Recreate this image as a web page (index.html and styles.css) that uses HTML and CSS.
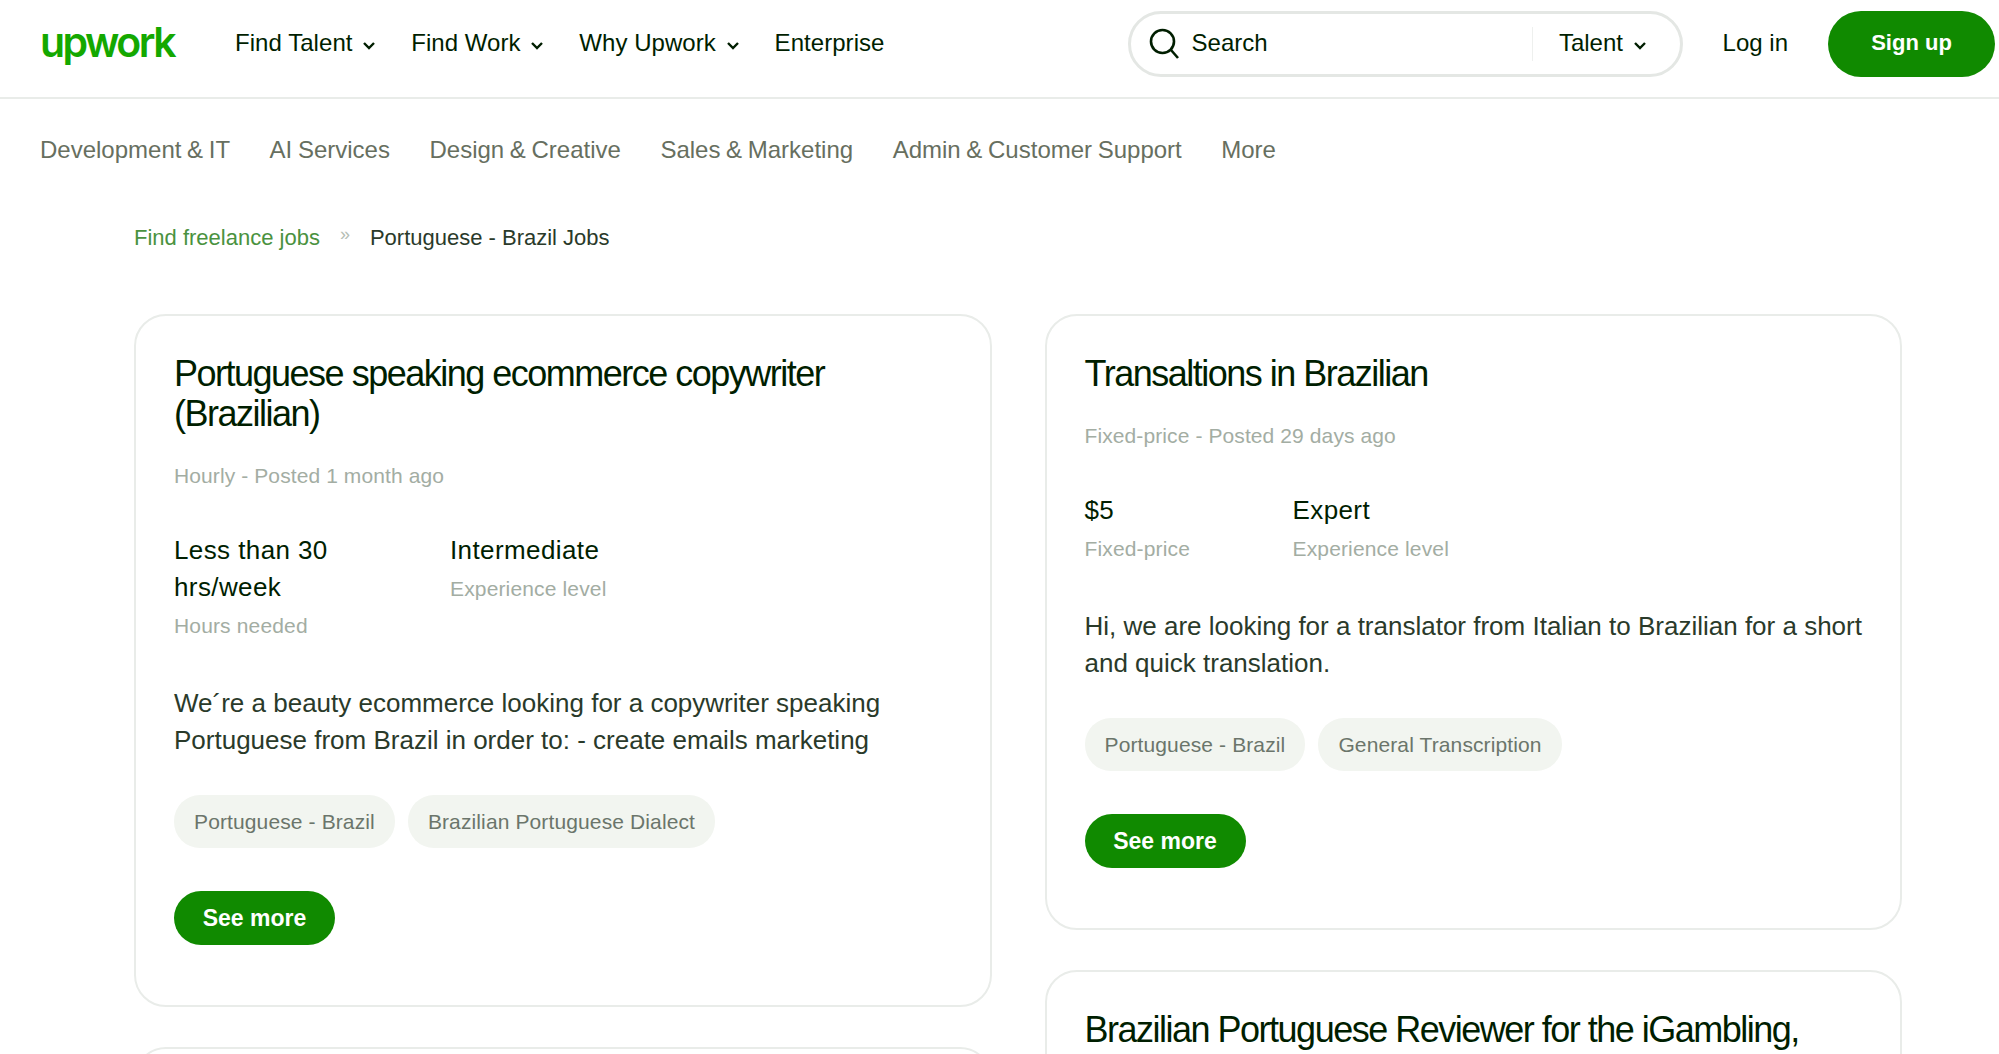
FILE: index.html
```html
<!DOCTYPE html>
<html lang="en">
<head>
	<meta charset="UTF-8">
	<title>Portuguese - Brazil Jobs</title>
	<link rel="stylesheet" href="styles.css">
</head>
<body>
	<header class="topbar">
		<a class="logo">upwork</a>
		<nav class="main-nav">
			<a>Find Talent <svg class="chev" viewBox="0 0 14 10"><path d="M2 2l5 5 5-5"/></svg></a>
			<a>Find Work <svg class="chev" viewBox="0 0 14 10"><path d="M2 2l5 5 5-5"/></svg></a>
			<a>Why Upwork <svg class="chev" viewBox="0 0 14 10"><path d="M2 2l5 5 5-5"/></svg></a>
			<a>Enterprise</a>
		</nav>
		<div class="search">
			<svg class="search-icon" viewBox="0 0 30 32"><circle cx="13.5" cy="13.5" r="11.5"/><path d="M22 22l7 8"/></svg>
			<span class="search-text">Search</span>
			<span class="search-type">Talent <svg class="chev" viewBox="0 0 14 10"><path d="M2 2l5 5 5-5"/></svg></span>
		</div>
		<a class="login">Log in</a>
		<a class="btn signup">Sign up</a>
	</header>

	<nav class="sub-nav">
		<a>Development &amp; IT</a>
		<a>AI Services</a>
		<a>Design &amp; Creative</a>
		<a>Sales &amp; Marketing</a>
		<a>Admin &amp; Customer Support</a>
		<a>More</a>
	</nav>

	<div class="crumbs">
		<a>Find freelance jobs</a>
		<span class="sep">»</span>
		<span>Portuguese - Brazil Jobs</span>
	</div>

	<main class="jobs">
		<div class="col">
			<article class="card">
				<h2>Portuguese speaking ecommerce copywriter (Brazilian)</h2>
				<p class="meta">Hourly - Posted 1 month ago</p>
				<div class="stats">
					<div class="stat stat-hours">
						<strong>Less than 30 hrs/week</strong>
						<span>Hours needed</span>
					</div>
					<div class="stat">
						<strong>Intermediate</strong>
						<span>Experience level</span>
					</div>
				</div>
				<p class="desc">We´re a beauty ecommerce looking for a copywriter speaking Portuguese from Brazil in order to: - create emails marketing</p>
				<div class="tags">
					<span>Portuguese - Brazil</span>
					<span>Brazilian Portuguese Dialect</span>
				</div>
				<a class="btn see-more">See more</a>
			</article>
			<article class="card"></article>
		</div>
		<div class="col">
			<article class="card">
				<h2>Transaltions in Brazilian</h2>
				<p class="meta">Fixed-price - Posted 29 days ago</p>
				<div class="stats">
					<div class="stat stat-price">
						<strong>$5</strong>
						<span>Fixed-price</span>
					</div>
					<div class="stat">
						<strong>Expert</strong>
						<span>Experience level</span>
					</div>
				</div>
				<p class="desc">Hi, we are looking for a translator from Italian to Brazilian for a short and quick translation.</p>
				<div class="tags">
					<span>Portuguese - Brazil</span>
					<span>General Transcription</span>
				</div>
				<a class="btn see-more">See more</a>
			</article>
			<article class="card">
				<h2>Brazilian Portuguese Reviewer for the iGambling,</h2>
			</article>
		</div>
	</main>
</body>
</html>
```

FILE: styles.css
```css
* {
	box-sizing: border-box;
	padding: 0;
	margin: 0;
}

html, body {
	height: 100%;
	overflow: hidden;
}

body {
	font-family: "Liberation Sans", Arial, sans-serif;
	background: #fff;
	color: #001e00;
}

.topbar {
	display: flex;
	align-items: center;
	height: 99px;
	padding: 0 4px 10px 40px;
	border-bottom: 2px solid #e9ece9;
}

.logo {
	width: 195px;
	padding-bottom: 3px;
	font-family: "Inter", sans-serif;
	font-size: 41px;
	font-weight: 600;
	letter-spacing: -2.5px;
	color: #14a800;
}

.main-nav {
	display: flex;
	gap: 35px;
	padding-bottom: 2px;
	font-size: 24px;
	letter-spacing: 0.05px;
}

.chev {
	width: 14px;
	height: 10px;
	margin-left: 3px;
	fill: none;
	stroke: #001e00;
	stroke-width: 2.4;
}

.search {
	display: flex;
	align-items: center;
	width: 555px;
	height: 66px;
	margin-left: auto;
	padding: 0 33px 0 18px;
	border: 3px solid #e4e7e4;
	border-radius: 33px;
	font-size: 24px;
}

.search-icon {
	width: 30px;
	height: 32px;
	fill: none;
	stroke: #001e00;
	stroke-width: 2.6;
}

.search-text {
	flex: 1;
	margin-left: 13px;
	padding-bottom: 2px;
}

.search-type {
	height: 34px;
	padding-left: 26px;
	border-left: 1px solid #eef0ee;
	line-height: 32px;
}

.login {
	margin: 0 40px;
	padding-bottom: 2px;
	font-size: 24px;
}

.btn {
	display: flex;
	align-items: center;
	justify-content: center;
	border-radius: 33px;
	background: #108a00;
	color: #fff;
	font-weight: 700;
}

.signup {
	width: 167px;
	height: 66px;
	padding-bottom: 2px;
	font-size: 22px;
}

.sub-nav {
	display: flex;
	gap: 39.5px;
	padding: 37px 40px 0;
	font-size: 24px;
	word-spacing: -1px;
	color: #676f5f;
}

.crumbs {
	display: flex;
	align-items: center;
	padding: 61px 0 0 134px;
	font-size: 22px;
	color: #2a3a2a;
}

.crumbs a {
	color: #4a9240;
}

.sep {
	margin: -8px 20px 0;
	font-size: 18px;
	color: #b5beb5;
}

.jobs {
	display: flex;
	gap: 53px;
	padding: 63px 97px 0 134px;
}

.col {
	display: flex;
	flex: 1;
	flex-direction: column;
	gap: 40px;
	min-width: 0;
}

.card {
	padding: 38px 38px 60px;
	border: 2px solid #e9ece9;
	border-radius: 32px;
}

h2 {
	font-size: 36px;
	font-weight: 400;
	line-height: 40px;
	letter-spacing: -1.5px;
}

.meta {
	margin-top: 22px;
	font-size: 21px;
	letter-spacing: 0.1px;
	line-height: 39px;
	color: #a3ada3;
}

.stats {
	display: flex;
	gap: 60px;
	margin-top: 37px;
}

.stat strong {
	display: block;
	font-size: 26px;
	font-weight: 400;
	letter-spacing: 0.4px;
	line-height: 37px;
}

.stat span {
	display: block;
	font-size: 21px;
	letter-spacing: 0.15px;
	line-height: 39px;
	color: #a3ada3;
}

.stat-hours {
	width: 216px;
}

.stat-price {
	width: 148px;
}

.desc {
	margin-top: 40px;
	font-size: 26px;
	line-height: 37px;
	color: #2a3a2a;
}

.tags {
	display: flex;
	gap: 13px;
	margin-top: 36px;
}

.tags span {
	padding: 0 20px;
	border-radius: 26px;
	background: #f2f5f0;
	font-size: 21px;
	letter-spacing: 0.12px;
	line-height: 53px;
	color: #6b756b;
}

.see-more {
	width: 161px;
	height: 54px;
	margin-top: 43px;
	font-size: 23px;
}
```
